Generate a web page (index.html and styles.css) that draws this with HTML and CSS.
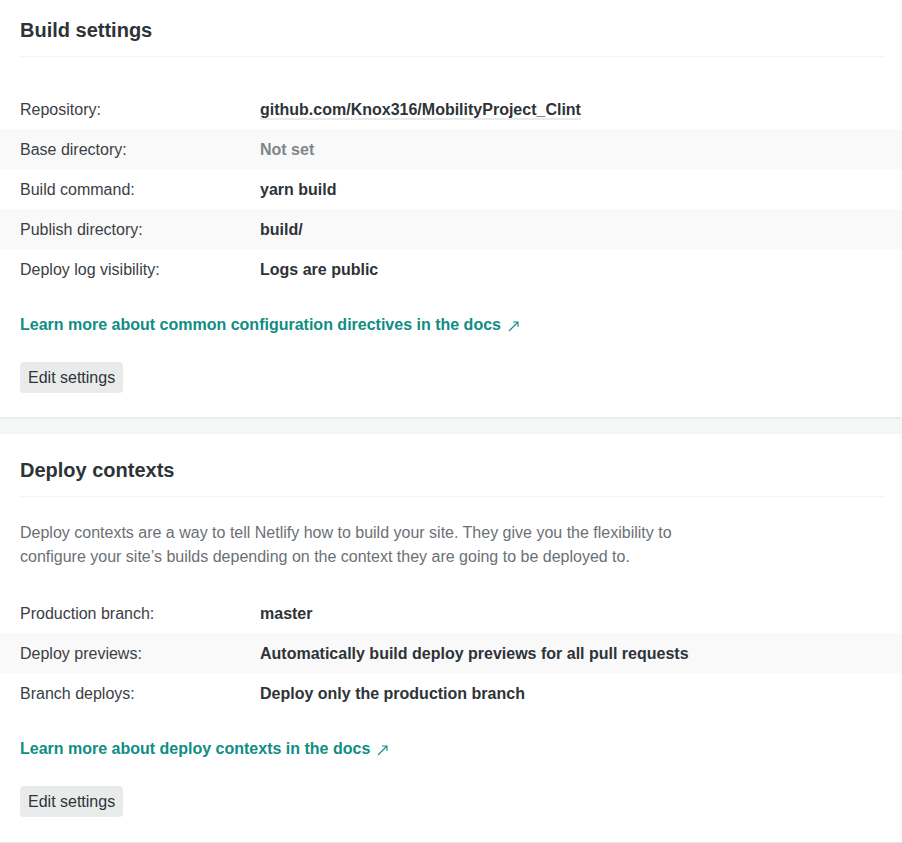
FILE: index.html
```html
<!DOCTYPE html>
<html>
<head>
<meta charset="utf-8">
<link rel="stylesheet" href="styles.css">
</head>
<body>
<div class="page">
  <section class="card card-first">
    <div class="card-header"><h2>Build settings</h2></div>
    <dl class="rows rows-first">
      <div class="row"><dt>Repository:</dt><dd><span class="repo">github.com/Knox316/MobilityProject_Clint</span></dd></div>
      <div class="row alt"><dt>Base directory:</dt><dd class="muted">Not set</dd></div>
      <div class="row"><dt>Build command:</dt><dd>yarn build</dd></div>
      <div class="row alt"><dt>Publish directory:</dt><dd>build/</dd></div>
      <div class="row"><dt>Deploy log visibility:</dt><dd>Logs are public</dd></div>
    </dl>
    <a class="doc-link" href="#">Learn more about common configuration directives in the docs<svg class="ext" width="14" height="14" viewBox="0 0 14 14"><path d="M2 12 L11 3 M6 3 H11 V8" fill="none" stroke="currentColor" stroke-width="1.1"/></svg></a>
    <button class="btn">Edit settings</button>
  </section>
  <section class="card card-second">
    <div class="card-header"><h2>Deploy contexts</h2></div>
    <p class="desc">Deploy contexts are a way to tell Netlify how to build your site. They give you the flexibility to configure your site’s builds depending on the context they are going to be deployed to.</p>
    <dl class="rows">
      <div class="row"><dt>Production branch:</dt><dd>master</dd></div>
      <div class="row alt"><dt>Deploy previews:</dt><dd>Automatically build deploy previews for all pull requests</dd></div>
      <div class="row"><dt>Branch deploys:</dt><dd>Deploy only the production branch</dd></div>
    </dl>
    <a class="doc-link" href="#">Learn more about deploy contexts in the docs<svg class="ext" width="14" height="14" viewBox="0 0 14 14"><path d="M2 12 L11 3 M6 3 H11 V8" fill="none" stroke="currentColor" stroke-width="1.1"/></svg></a>
    <button class="btn">Edit settings</button>
  </section>
</div>
</body>
</html>
```
FILE: styles.css
```css
* { box-sizing: border-box; }
html, body { margin: 0; padding: 0; background: #f6f8f8; }
body {
  font-family: "Liberation Sans", Arial, sans-serif;
  font-size: 16px;
  color: #2e3338;
}
.page {
  display: flex;
  flex-direction: column;
  gap: 17px;
  margin-top: -6px;
}
.card {
  background: #fff;
  display: flex;
  flex-direction: column;
  align-items: flex-start;
  padding: 22px 0 24px;
  box-shadow: 0 1px 3px rgba(0, 0, 0, 0.09);
}
.card-second {
  padding-bottom: 25px;
  border-bottom: 1px solid #e4e7e7;
}
.card-header {
  align-self: stretch;
  margin: 0 18px 0 20px;
  padding-bottom: 12px;
  border-bottom: 1px solid #f2f3f3;
}
.card-header h2 {
  margin: 0;
  font-size: 20px;
  line-height: 28px;
  font-weight: 700;
  color: #2e3338;
}
.rows {
  align-self: stretch;
  margin: 24px 0 0;
  padding: 0;
}
.rows-first { margin-top: 32px; }
.row {
  display: flex;
  height: 40px;
  align-items: center;
  padding: 2px 20px 0;
}
.row.alt { background: #f9f9f9; }
.row dt {
  width: 240px;
  flex: none;
  color: #3b4045;
}
.row dd {
  margin: 0;
  font-weight: 700;
  color: #2e3338;
}
.row dd.muted { color: #7f868a; }
.repo {
  border-bottom: 2px solid #e9ebeb;
  padding-bottom: 0;
}
.desc {
  margin: 24px 0 0 20px;
  max-width: 690px;
  line-height: 24px;
  color: #6b7075;
}
.doc-link {
  margin: 23px 0 0 20px;
  line-height: 26px;
  font-weight: 700;
  color: #0f8d83;
  text-decoration: none;
  display: inline-flex;
  align-items: center;
}
.ext { margin-left: 6px; margin-top: 1px; }
.btn {
  margin: 24px 0 0 20px;
  height: 31px;
  padding: 0 8px;
  border: none;
  border-radius: 4px;
  background: #e9ebeb;
  font-family: "Liberation Sans", Arial, sans-serif;
  font-size: 16px;
  color: #2e3338;
}
```
